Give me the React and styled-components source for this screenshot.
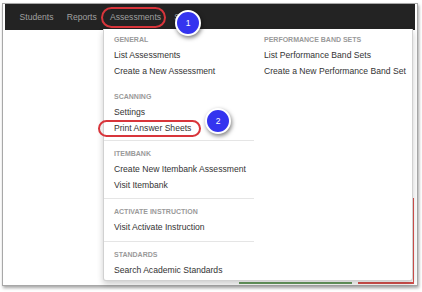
import React from 'react';
import styled, { createGlobalStyle } from 'styled-components';

const GlobalStyle = createGlobalStyle`
  html, body {
    margin: 0;
    padding: 0;
    background: #fff;
    font-family: "Liberation Sans", Arial, sans-serif;
  }
`;

const navItems = ['Students', 'Reports', 'Assessments', 'Setup'];

const leftSections = [
  { title: 'GENERAL', items: ['List Assessments', 'Create a New Assessment'], pt: 5, pb: 6 },
  { title: 'SCANNING', items: ['Settings', 'Print Answer Sheets'], pt: 6, pb: 4, divided: true },
  { title: 'ITEMBANK', items: ['Create New Itembank Assessment', 'Visit Itembank'], pt: 7, pb: 5, divided: true },
  { title: 'ACTIVATE INSTRUCTION', items: ['Visit Activate Instruction'], pt: 7, pb: 5, divided: true },
  { title: 'STANDARDS', items: ['Search Academic Standards'], pt: 7, pb: 0 },
];

const rightSections = [
  { title: 'PERFORMANCE BAND SETS', items: ['List Performance Band Sets', 'Create a New Performance Band Set'], pt: 5, pb: 6 },
];

const Page = styled.div`
  width: 422px;
  height: 292px;
  padding: 3px 0 0 2px;
  box-sizing: border-box;
  overflow: hidden;
`;

const Frame = styled.div`
  position: relative;
  width: 416px;
  height: 283px;
  box-sizing: border-box;
  border: 1px solid #a8a8a8;
  box-shadow: 1px 2px 3px rgba(0, 0, 0, 0.35);
  background: #fff;
  padding: 0 2px 1px 2px;
  display: flex;
  flex-direction: column;
`;

const NavBar = styled.nav`
  height: 25px;
  flex: none;
  background: #232323;
  display: flex;
  align-items: center;
  padding: 0 0 1px 8px;
`;

const NavItem = styled.span`
  color: #a0a0a0;
  font-size: 8.6px;
  padding: 0 6.6px;
  white-space: nowrap;
`;

const Content = styled.div`
  flex: 1;
  display: flex;
  flex-direction: column;
  justify-content: flex-end;
  align-items: flex-end;
  padding-right: 1px;
`;

const ChartCard = styled.div`
  width: 174px;
  height: 86px;
  border-right: 1px solid #d9534f;
  display: flex;
  flex-direction: column;
  justify-content: flex-end;
`;

const ChartBase = styled.div`
  display: flex;
  gap: 6px;
  height: 2px;
`;

const BaseSegment = styled.div`
  background: ${(p) => p.color};
  width: ${(p) => p.w};
  flex: ${(p) => (p.w ? 'none' : 1)};
`;

const Dropdown = styled.div`
  position: absolute;
  left: 100px;
  top: 25px;
  width: 310px;
  height: 252px;
  box-sizing: border-box;
  background: #fff;
  border: 1px solid rgba(0, 0, 0, 0.18);
  border-top: none;
  border-radius: 0 0 3px 3px;
  box-shadow: 0 3px 6px rgba(0, 0, 0, 0.2);
  display: grid;
  grid-template-columns: 150px 1fr;
  z-index: 2;
`;

const Column = styled.div`
  display: flex;
  flex-direction: column;
`;

const Section = styled.div`
  padding: ${(p) => p.pt}px 0 ${(p) => p.pb}px 10px;
  border-bottom: ${(p) => (p.divided ? '1px solid #e5e5e5' : 'none')};
`;

const Header = styled.div`
  font-size: 7px;
  font-weight: bold;
  color: #9a9a9a;
  line-height: 12px;
  margin-bottom: 2px;
  white-space: nowrap;
`;

const MenuItem = styled.div`
  font-size: 8.6px;
  color: #333;
  line-height: 15.5px;
  white-space: nowrap;
`;

const Ring = styled.div`
  position: absolute;
  left: ${(p) => p.x}px;
  top: ${(p) => p.y}px;
  width: ${(p) => p.w}px;
  height: ${(p) => p.h}px;
  box-sizing: border-box;
  border: 2px solid #d8353b;
  border-radius: 12px;
  z-index: 3;
`;

const Badge = styled.div`
  position: absolute;
  left: ${(p) => p.x}px;
  top: ${(p) => p.y}px;
  width: 26px;
  height: 26px;
  box-sizing: border-box;
  border-radius: 50%;
  border: 2px solid #fff;
  background: #3434ef;
  box-shadow: 1px 2px 4px rgba(0, 0, 0, 0.5);
  color: #fff;
  font-size: 8.5px;
  display: flex;
  align-items: center;
  justify-content: center;
  z-index: 4;
`;

function MenuColumn({ sections }) {
  return (
    <Column>
      {sections.map((s) => (
        <Section key={s.title} pt={s.pt} pb={s.pb} divided={s.divided}>
          <Header>{s.title}</Header>
          {s.items.map((item) => (
            <MenuItem key={item}>{item}</MenuItem>
          ))}
        </Section>
      ))}
    </Column>
  );
}

export default function App() {
  return (
    <Page>
      <GlobalStyle />
      <Frame>
        <NavBar>
          {navItems.map((n) => (
            <NavItem key={n}>{n}</NavItem>
          ))}
        </NavBar>
        <Content>
          <ChartCard>
            <ChartBase>
              <BaseSegment color="#6a9e62" w="113px" />
              <BaseSegment color="#d9534f" />
            </ChartBase>
          </ChartCard>
        </Content>

        <Dropdown>
          <MenuColumn sections={leftSections} />
          <MenuColumn sections={rightSections} />
        </Dropdown>

        <Ring x={98} y={3} w={65} h={21} />
        <Ring x={95} y={116} w={103} h={17} />
        <Badge x={172} y={6}>1</Badge>
        <Badge x={202} y={104}>2</Badge>
      </Frame>
    </Page>
  );
}
